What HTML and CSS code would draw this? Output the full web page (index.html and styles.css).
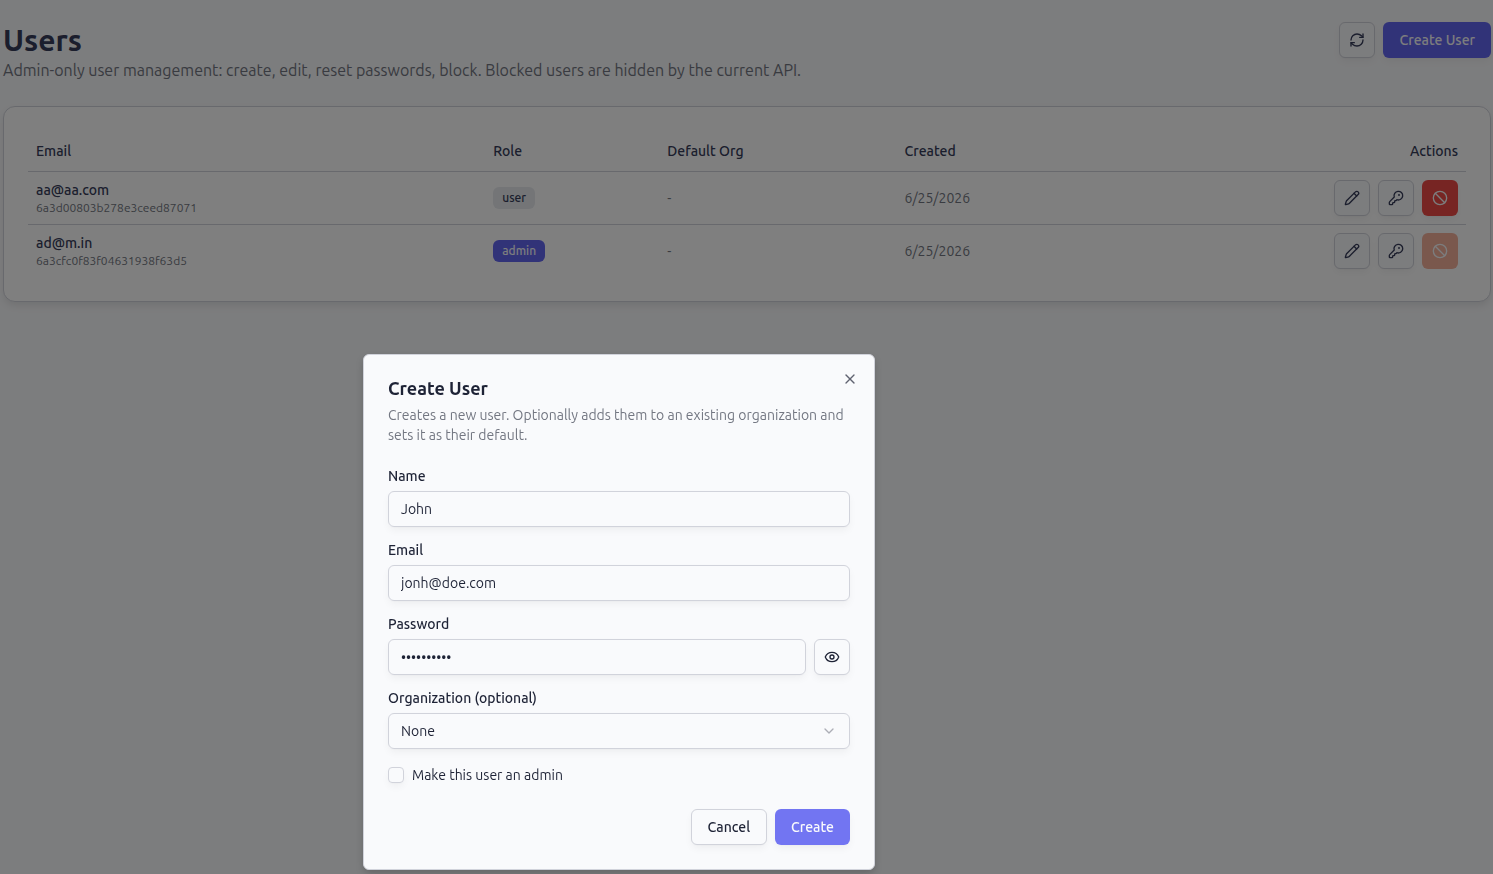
FILE: index.html
```html
<!DOCTYPE html>
<html lang="en">
<head>
  <meta charset="UTF-8">
  <meta name="viewport" content="width=device-width, initial-scale=1.0">
  <title>Users</title>
  <link rel="stylesheet" href="styles.css">
</head>
<body>
  <svg class="sprite" aria-hidden="true">
    <symbol id="icon-pencil" viewBox="0 0 24 24">
      <path d="M21.174 6.812a1 1 0 0 0-3.986-3.987L3.842 16.174a2 2 0 0 0-.5.83l-1.321 4.352a.5.5 0 0 0 .623.622l4.353-1.32a2 2 0 0 0 .83-.497z"/>
      <path d="m15 5 4 4"/>
    </symbol>
    <symbol id="icon-key" viewBox="0 0 24 24">
      <path d="M2.586 17.414A2 2 0 0 0 2 18.828V21a1 1 0 0 0 1 1h3a1 1 0 0 0 1-1v-1a1 1 0 0 1 1-1h1a1 1 0 0 0 1-1v-1a1 1 0 0 1 1-1h.172a2 2 0 0 0 1.414-.586l.814-.814a6.5 6.5 0 1 0-4-4z"/>
      <circle cx="16.5" cy="7.5" r=".5" fill="currentColor"/>
    </symbol>
    <symbol id="icon-ban" viewBox="0 0 24 24">
      <circle cx="12" cy="12" r="10"/>
      <path d="m4.9 4.9 14.2 14.2"/>
    </symbol>
  </svg>

  <main class="page">
    <header class="page-header">
      <div>
        <h1>Users</h1>
        <p class="subtitle">Admin-only user management: create, edit, reset passwords, block. Blocked users are hidden by the current API.</p>
      </div>
      <div class="page-actions">
        <button type="button" class="btn btn-outline btn-icon" aria-label="Refresh">
          <svg class="icon" viewBox="0 0 24 24">
            <path d="M3 12a9 9 0 0 1 9-9 9.75 9.75 0 0 1 6.74 2.74L21 8"/>
            <path d="M21 3v5h-5"/>
            <path d="M21 12a9 9 0 0 1-9 9 9.75 9.75 0 0 1-6.74-2.74L3 16"/>
            <path d="M8 16H3v5"/>
          </svg>
        </button>
        <button type="button" class="btn btn-primary">Create User</button>
      </div>
    </header>

    <section class="card">
      <table class="users">
        <thead>
          <tr>
            <th class="col-email">Email</th>
            <th class="col-role">Role</th>
            <th class="col-org">Default Org</th>
            <th>Created</th>
            <th class="col-actions">Actions</th>
          </tr>
        </thead>
        <tbody>
          <tr>
            <td>
              <div class="user-email">aa@aa.com</div>
              <div class="user-id">6a3d00803b278e3ceed87071</div>
            </td>
            <td><span class="badge">user</span></td>
            <td class="muted">-</td>
            <td class="muted">6/25/2026</td>
            <td>
              <div class="row-actions">
                <button type="button" class="btn btn-outline btn-icon" aria-label="Edit"><svg class="icon"><use href="#icon-pencil"/></svg></button>
                <button type="button" class="btn btn-outline btn-icon" aria-label="Reset password"><svg class="icon"><use href="#icon-key"/></svg></button>
                <button type="button" class="btn btn-danger btn-icon" aria-label="Block"><svg class="icon"><use href="#icon-ban"/></svg></button>
              </div>
            </td>
          </tr>
          <tr>
            <td>
              <div class="user-email">ad@m.in</div>
              <div class="user-id">6a3cfc0f83f04631938f63d5</div>
            </td>
            <td><span class="badge badge-admin">admin</span></td>
            <td class="muted">-</td>
            <td class="muted">6/25/2026</td>
            <td>
              <div class="row-actions">
                <button type="button" class="btn btn-outline btn-icon" aria-label="Edit"><svg class="icon"><use href="#icon-pencil"/></svg></button>
                <button type="button" class="btn btn-outline btn-icon" aria-label="Reset password"><svg class="icon"><use href="#icon-key"/></svg></button>
                <button type="button" class="btn btn-danger btn-icon" aria-label="Block" disabled><svg class="icon"><use href="#icon-ban"/></svg></button>
              </div>
            </td>
          </tr>
        </tbody>
      </table>
    </section>
  </main>

  <div class="overlay"></div>

  <div class="dialog" role="dialog" aria-modal="true" aria-labelledby="dialog-title">
    <div class="dialog-header">
      <h2 id="dialog-title">Create User</h2>
      <p>Creates a new user. Optionally adds them to an existing organization and sets it as their default.</p>
    </div>

    <form class="form">
      <div class="field">
        <label for="name">Name</label>
        <input type="text" class="control" id="name" value="John">
      </div>
      <div class="field">
        <label for="email">Email</label>
        <input type="email" class="control" id="email" value="jonh@doe.com">
      </div>
      <div class="field">
        <label for="password">Password</label>
        <div class="password-row">
          <input type="password" class="control" id="password" value="password12">
          <button type="button" class="btn btn-outline btn-icon" aria-label="Show password">
            <svg class="icon" viewBox="0 0 24 24">
              <path d="M2.062 12.348a1 1 0 0 1 0-.696 10.75 10.75 0 0 1 19.876 0 1 1 0 0 1 0 .696 10.75 10.75 0 0 1-19.876 0"/>
              <circle cx="12" cy="12" r="3"/>
            </svg>
          </button>
        </div>
      </div>
      <div class="field">
        <label for="org">Organization (optional)</label>
        <div class="select-wrap">
          <select class="control" id="org">
            <option>None</option>
          </select>
          <svg class="icon chevron" viewBox="0 0 24 24"><path d="m6 9 6 6 6-6"/></svg>
        </div>
      </div>
      <div class="check-row">
        <input type="checkbox" id="is-admin">
        <label for="is-admin">Make this user an admin</label>
      </div>
    </form>

    <div class="dialog-footer">
      <button type="button" class="btn btn-outline">Cancel</button>
      <button type="button" class="btn btn-primary btn-hover">Create</button>
    </div>

    <button type="button" class="dialog-close" aria-label="Close">
      <svg class="icon" viewBox="0 0 24 24"><path d="M18 6 6 18"/><path d="m6 6 12 12"/></svg>
    </button>
  </div>
</body>
</html>
```

FILE: styles.css
```css
:root {
  --bg: #f9fafc;
  --card: #ffffff;
  --text: #1e2336;
  --page-text: #363c5a;
  --muted: #737782;
  --border: #d1d3db;
  --primary: #6366f1;
  --danger: #ef4b46;
  --danger-disabled: #f4b09a;
  --shadow: 0 4px 8px -1px rgba(0, 0, 0, 0.05), 0 1px 2px -1px rgba(0, 0, 0, 0.05);
}

* {
  box-sizing: border-box;
}
body {
  margin: 0;
  min-height: 100vh;
  background: var(--bg);
  color: var(--text);
  font-family: Ubuntu, "Noto Sans", "Open Sans", sans-serif;
  font-size: 14px;
  line-height: 20px;
}
h1, h2, p {
  margin: 0;
}
button, input, select {
  font: inherit;
  color: inherit;
}
.sprite {
  display: none;
}
.icon {
  width: 16px;
  height: 16px;
  flex-shrink: 0;
  fill: none;
  stroke: currentColor;
  stroke-width: 2;
  stroke-linecap: round;
  stroke-linejoin: round;
}

/* Page */
.page {
  display: flex;
  flex-direction: column;
  gap: 24px;
  padding: 22px 2px 22px 3px;
  color: var(--page-text);
}
.page-header {
  display: flex;
  justify-content: space-between;
  align-items: flex-start;
}
h1 {
  font-size: 30px;
  line-height: 36px;
  font-weight: 700;
}
.subtitle {
  font-size: 16px;
  line-height: 24px;
  color: var(--muted);
}
.page-actions {
  display: flex;
  gap: 8px;
}

/* Buttons */
.btn {
  display: inline-flex;
  align-items: center;
  justify-content: center;
  height: 36px;
  padding: 0 16px;
  border: 0;
  border-radius: 6px;
  font-weight: 500;
  box-shadow: var(--shadow);
  cursor: pointer;
}
.btn-outline {
  background: var(--bg);
  border: 1px solid var(--border);
}
.btn-primary {
  background: var(--primary);
  color: #f9fafc;
}
.btn-hover {
  background: rgba(99, 102, 241, 0.9);
}
.btn-danger {
  background: var(--danger);
  color: #f9fafc;
}
.btn-danger:disabled {
  background: var(--danger-disabled);
  box-shadow: none;
}
.btn-icon {
  width: 36px;
  padding: 0;
  flex-shrink: 0;
}

/* Users table */
.card {
  padding: 24px;
  background: var(--card);
  border: 1px solid var(--border);
  border-radius: 12px;
  box-shadow: 0 4px 8px -1px rgba(0, 0, 0, 0.1);
}
.users {
  width: 100%;
  border-collapse: separate;
  border-spacing: 0;
}
.users th {
  height: 41px;
  padding: 0 8px;
  text-align: left;
  font-weight: 500;
  border-bottom: 1px solid var(--border);
}
.users td {
  padding: 8px;
  border-bottom: 1px solid var(--border);
}
.users tbody tr:last-child td {
  border-bottom: 0;
}
.col-email {
  width: 31.8%;
}
.col-role {
  width: 12.1%;
}
.col-org {
  width: 16.5%;
}
.users .col-actions {
  text-align: right;
}
.user-email {
  font-weight: 500;
}
.user-id {
  font-size: 12px;
  line-height: 16px;
  color: var(--muted);
}
.muted {
  color: var(--muted);
}
.badge {
  display: inline-block;
  padding: 3px 9px;
  border-radius: 6px;
  background: #e8ebef;
  font-size: 12px;
  line-height: 16px;
  font-weight: 500;
}
.badge-admin {
  background: var(--primary);
  color: #f9fafc;
}
.row-actions {
  display: flex;
  justify-content: flex-end;
  gap: 8px;
}

/* Create user dialog */
.overlay {
  position: fixed;
  inset: 0;
  background: rgba(0, 0, 0, 0.5);
}
.dialog {
  position: absolute;
  top: 354px;
  left: 363px;
  width: 512px;
  display: flex;
  flex-direction: column;
  gap: 24px;
  padding: 24px;
  background: var(--bg);
  border: 1px solid var(--border);
  border-radius: 6px;
  box-shadow: 0 4px 8px -1px rgba(0, 0, 0, 0.2);
}
.dialog-header {
  display: flex;
  flex-direction: column;
  gap: 8px;
}
.dialog-header h2 {
  font-size: 18px;
  line-height: 18px;
  font-weight: 600;
}
.dialog-header p {
  color: var(--muted);
}
.form {
  display: flex;
  flex-direction: column;
  gap: 16px;
}
.field {
  display: flex;
  flex-direction: column;
  gap: 8px;
}
.field label {
  line-height: 14px;
  font-weight: 500;
}
.control {
  width: 100%;
  height: 36px;
  padding: 0 12px;
  background: transparent;
  border: 1px solid var(--border);
  border-radius: 6px;
  box-shadow: var(--shadow);
}
.password-row {
  display: flex;
  gap: 8px;
}
.select-wrap {
  display: grid;
  align-items: center;
}
.select-wrap .control,
.chevron {
  grid-area: 1 / 1;
}
.select-wrap .control {
  appearance: none;
}
.chevron {
  justify-self: end;
  margin-right: 13px;
  opacity: 0.35;
  pointer-events: none;
}
.check-row {
  display: flex;
  align-items: center;
  gap: 8px;
}
.check-row input {
  appearance: none;
  width: 16px;
  height: 16px;
  margin: 0;
  border: 1px solid var(--border);
  border-radius: 4px;
  box-shadow: var(--shadow);
}
.check-row input:checked {
  background: var(--primary);
}
.dialog-footer {
  display: flex;
  justify-content: flex-end;
  gap: 8px;
}
.dialog-close {
  position: absolute;
  top: 16px;
  right: 16px;
  display: flex;
  padding: 0;
  background: none;
  border: 0;
  opacity: 0.7;
  cursor: pointer;
}
```
